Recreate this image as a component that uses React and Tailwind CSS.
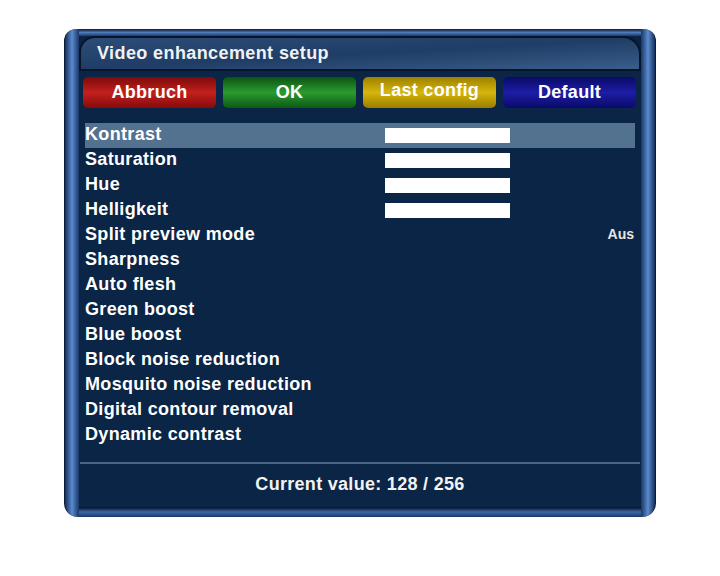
const rows = [
  { label: 'Kontrast', bar: true },
  { label: 'Saturation', bar: true },
  { label: 'Hue', bar: true },
  { label: 'Helligkeit', bar: true },
  { label: 'Split preview mode', value: 'Aus' },
  { label: 'Sharpness' },
  { label: 'Auto flesh' },
  { label: 'Green boost' },
  { label: 'Blue boost' },
  { label: 'Block noise reduction' },
  { label: 'Mosquito noise reduction' },
  { label: 'Digital contour removal' },
  { label: 'Dynamic contrast' },
];

const buttons = [
  { label: 'Abbruch', cls: 'from-[#7e0a0a] via-[#c2201e] to-[#860b0b]' },
  { label: 'OK', cls: 'from-[#0c5412] via-[#2b9b30] to-[#0d5a14]' },
  { label: 'Last config', cls: 'from-[#9c8000] via-[#d6b60c] to-[#9a7e00] pb-[5px]' },
  { label: 'Default', cls: 'from-[#0a0a68] via-[#1d1da6] to-[#0a0a6a]' },
];

function App() {
  return (
    <div className="w-[720px] h-[576px] bg-white pt-[29px] pl-[64px] font-['Liberation_Sans',Arial,sans-serif]">
      <div className="w-[592px] h-[488px] flex">
        {/* left pipe */}
        <div className="w-[15px] h-full rounded-tl-[12px] rounded-bl-[14px] bg-gradient-to-r from-[#15305c] via-[#5b8bd0] to-[#1a3868] border-l border-[#0a1a33]" />

        <div className="flex-1 flex flex-col">
          {/* top rim */}
          <div className="h-[7px] bg-gradient-to-b from-[#0c1a30] via-[#4d7bbd] to-[#1b3b6c]" />

          {/* title */}
          <div className="h-[35px] bg-[#0b2242]">
            <div className="h-full rounded-tl-[16px] rounded-tr-[18px] border-2 border-[#07142a] bg-gradient-to-br from-[#2c4d78] via-[#1f3d66] to-[#3a5e8a] flex items-center pl-[16px]">
              <span className="text-[18px] font-bold text-[#f2f2f2] tracking-[0.4px]">Video enhancement setup</span>
            </div>
          </div>

          {/* body */}
          <div className="flex-1 bg-[#0a2545] flex flex-col">
            <div className="flex gap-[7px] pl-[4px] pr-[5px] pt-[6px]">
              {buttons.map((b) => (
                <div
                  key={b.label}
                  className={`w-[133px] h-[31px] rounded-[5px] bg-gradient-to-b ${b.cls} flex items-center justify-center text-[18px] font-bold text-white tracking-[0.3px]`}
                >
                  {b.label}
                </div>
              ))}
            </div>

            <div className="mt-[15px] px-[6px]">
              {rows.map((r, i) => (
                <div
                  key={r.label}
                  className={`h-[25px] flex items-center pb-[3px] ${i === 0 ? 'bg-[#52728f]' : ''}`}
                >
                  <span className="w-[300px] text-[18px] font-bold text-white tracking-[0.33px]">{r.label}</span>
                  {r.bar && <div className="w-[125px] h-[15px] mt-[3px] bg-white" />}
                  {r.value && (
                    <span className="ml-auto text-[14px] font-bold text-[#e6e6e6] pr-[1px]">{r.value}</span>
                  )}
                </div>
              ))}
            </div>

            <div className="mt-[14px] h-[2px] bg-[#4a6584] mx-[1px]" />

            <div className="flex-1 flex items-center justify-center pb-[2px] text-[18px] font-bold text-[#f2f2f2] tracking-[0.3px]">
              Current value: 128 / 256
            </div>
          </div>

          {/* bottom rim */}
          <div className="h-[10px] bg-gradient-to-b from-[#06101f] via-[#3d6aa8] to-[#1b3766]" />
        </div>

        {/* right pipe */}
        <div className="w-[15px] h-full rounded-tr-[12px] rounded-br-[14px] bg-gradient-to-r from-[#1a3868] via-[#5b8bd0] to-[#15305c] border-r border-[#0a1a33]" />
      </div>
    </div>
  );
}

export default App;
